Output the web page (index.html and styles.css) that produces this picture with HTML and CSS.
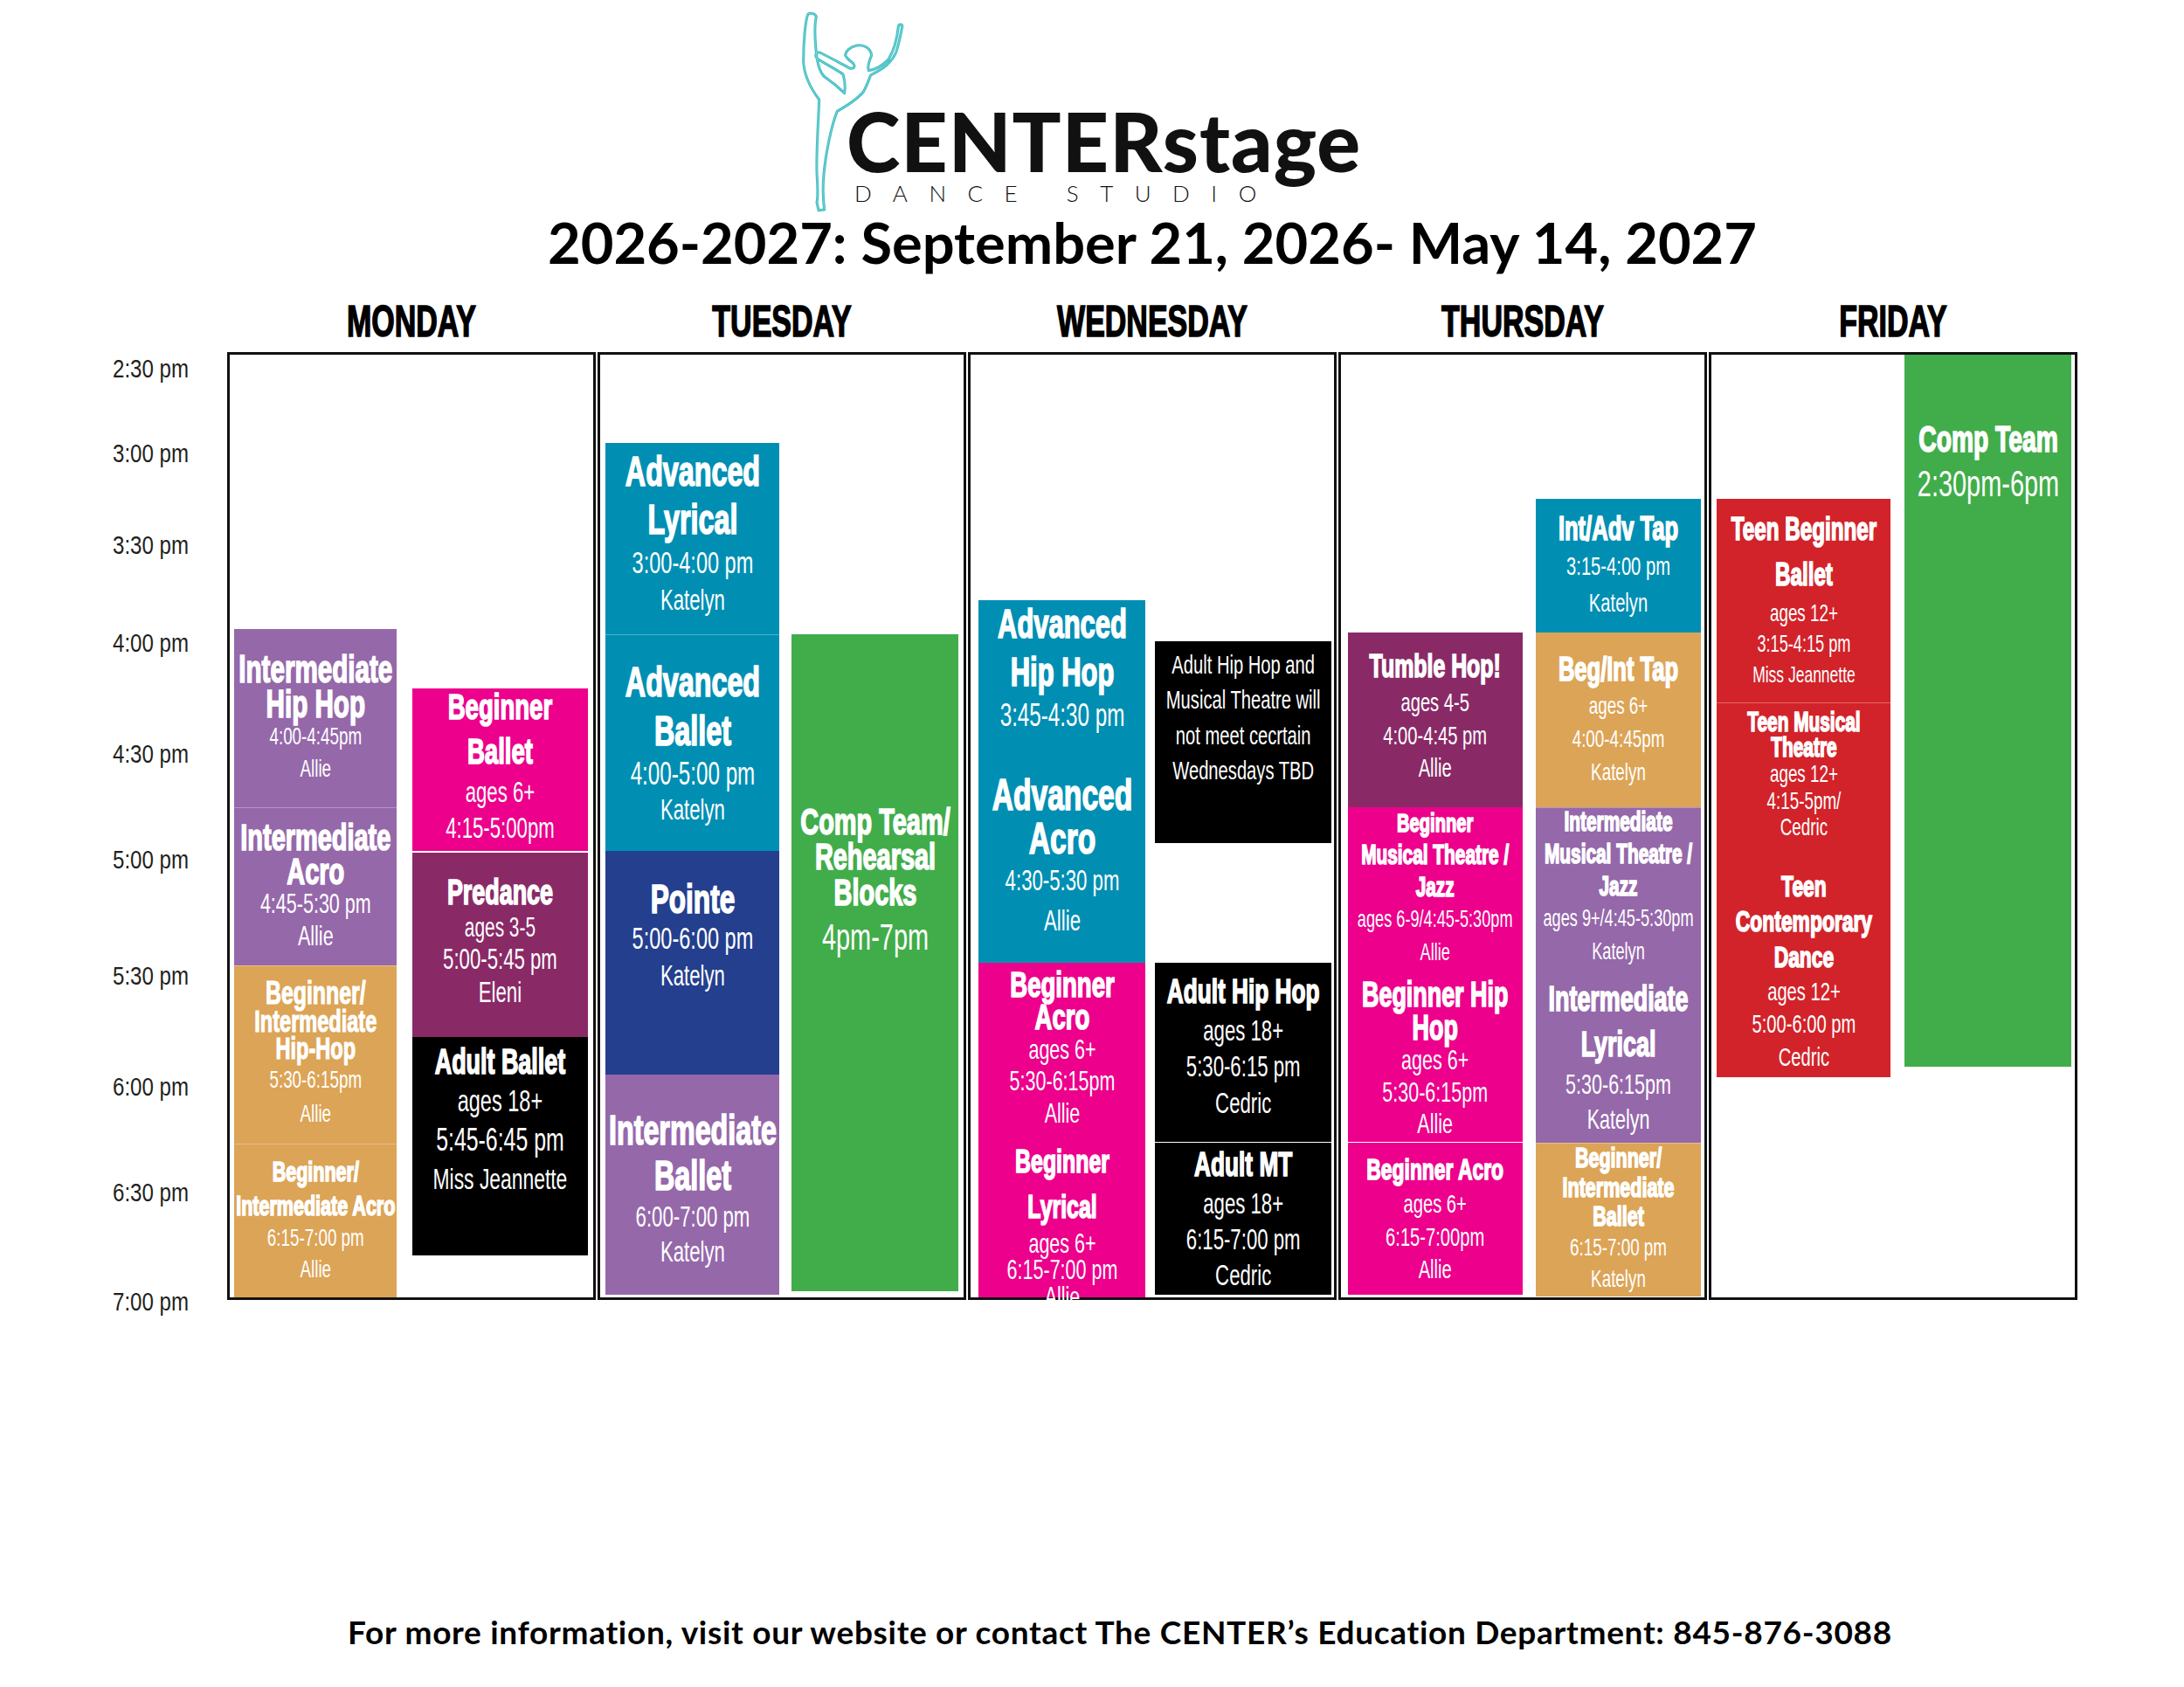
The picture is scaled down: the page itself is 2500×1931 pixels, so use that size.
FILE: index.html
```html
<!DOCTYPE html>
<html lang="en">
<head>
<meta charset="utf-8">
<title>CENTERstage Dance Studio Schedule 2026-2027</title>
<link rel="stylesheet" href="styles.css">
</head>
<body>
<header class="logo">
  <svg class="dancer" viewBox="0 0 450 705" aria-hidden="true">
    <path class="d1" d="M60,18 C50,40 44,120 44,180 C46,230 70,275 98,312 C96,380 88,480 90,560 C92,610 96,640 90,665 L96,692 L116,690 C112,660 108,630 114,570 C120,500 140,400 160,352 C190,335 230,310 250,285 C262,265 268,245 275,228 C310,210 345,190 362,150 C372,120 378,90 383,62 C386,52 372,50 370,62 C366,100 355,145 335,175 C310,200 285,210 268,212 C262,195 272,175 278,160 C275,135 250,122 228,126 C205,130 188,145 188,160 C192,172 205,178 215,188 C222,196 220,206 205,205 C185,195 150,175 100,150 C88,148 82,160 90,170 C120,190 160,210 180,225 C186,245 188,270 185,290 C165,270 140,250 118,235 C100,220 92,190 88,150 C84,110 80,60 88,28 C86,18 70,12 60,18 Z"/>
    <path class="d2" d="M60,18 C50,40 44,120 44,180 C46,230 70,275 98,312 C96,380 88,480 90,560 C92,610 96,640 90,665 L96,692 L116,690 C112,660 108,630 114,570 C120,500 140,400 160,352 C190,335 230,310 250,285 C262,265 268,245 275,228 C310,210 345,190 362,150 C372,120 378,90 383,62 C386,52 372,50 370,62 C366,100 355,145 335,175 C310,200 285,210 268,212 C262,195 272,175 278,160 C275,135 250,122 228,126 C205,130 188,145 188,160 C192,172 205,178 215,188 C222,196 220,206 205,205 C185,195 150,175 100,150 C88,148 82,160 90,170 C120,190 160,210 180,225 C186,245 188,270 185,290 C165,270 140,250 118,235 C100,220 92,190 88,150 C84,110 80,60 88,28 C86,18 70,12 60,18 Z"/>
  </svg>
  <div class="wordmark">
    <div class="brand">CENTERstage</div>
    <div class="studio">DANCE STUDIO</div>
  </div>
</header>
<h1 class="dates">2026-2027: September 21, 2026- May 14, 2027</h1>

<div class="days">
  <div class="dayname">MONDAY</div>
  <div class="dayname">TUESDAY</div>
  <div class="dayname">WEDNESDAY</div>
  <div class="dayname">THURSDAY</div>
  <div class="dayname">FRIDAY</div>
</div>

<main class="board">
  <div class="axis">
    <div class="tm" style="height:97px">2:30 pm</div>
    <div class="tm" style="height:105px">3:00 pm</div>
    <div class="tm" style="height:112px">3:30 pm</div>
    <div class="tm" style="height:127px">4:00 pm</div>
    <div class="tm" style="height:121px">4:30 pm</div>
    <div class="tm" style="height:133px">5:00 pm</div>
    <div class="tm" style="height:127px">5:30 pm</div>
    <div class="tm" style="height:121px">6:00 pm</div>
    <div class="tm" style="height:125px">6:30 pm</div>
    <div class="tm" style="height:40px">7:00 pm</div>
  </div>

  <div class="cols">
    <!-- MONDAY -->
    <section class="day mon">
      <div class="sub">
        <div class="blk pur" style="margin-top:314px;height:204px"><div class="in">
          <div class="t f44 l90">Intermediate</div><div class="t f44 l90">Hip Hop</div>
          <div class="i f28 l130">4:00-4:45pm</div><div class="i f28 l130">Allie</div>
        </div></div>
        <div class="blk pur seam" style="height:181px"><div class="in">
          <div class="t f43 l90">Intermediate</div><div class="t f43 l90">Acro</div>
          <div class="i f32 l115">4:45-5:30 pm</div><div class="i f32 l115">Allie</div>
        </div></div>
        <div class="blk org seam" style="height:204px"><div class="in">
          <div class="w f37 l90">Beginner/</div><div class="w f35 l90">Intermediate</div><div class="w f35 l90">Hip-Hop</div>
          <div class="i f28 l140">5:30-6:15pm</div><div class="i f28 l140">Allie</div>
        </div></div>
        <div class="blk org seam" style="height:176px"><div class="in">
          <div class="t f32 l120">Beginner/</div><div class="t f32 l120">Intermediate Acro</div>
          <div class="i f28 l130">6:15-7:00 pm</div><div class="i f28 l130">Allie</div>
        </div></div>
      </div>
      <div class="sub">
        <div class="blk pnk pb10" style="margin-top:382px;height:186px"><div class="in">
          <div class="t f41 l125">Beginner</div><div class="t f41 l125">Ballet</div>
          <div class="i f33 l125">ages 6+</div><div class="i f33 l125">4:15-5:00pm</div>
        </div></div>
        <div class="blk mag pb10" style="margin-top:2px;height:211px"><div class="in">
          <div class="t f40 l115">Predance</div>
          <div class="i f31 l115">ages 3-5</div><div class="i f33 l115">5:00-5:45 pm</div><div class="i f33 l115">Eleni</div>
        </div></div>
        <div class="blk blk-black pb62" style="height:250px"><div class="in">
          <div class="t f40 l115">Adult Ballet</div>
          <div class="i f35 l125">ages 18+</div><div class="i f37 l125">5:45-6:45 pm</div><div class="i f34 l125">Miss Jeannette</div>
        </div></div>
      </div>
    </section>

    <!-- TUESDAY -->
    <section class="day tue">
      <div class="sub">
        <div class="blk tel pb14" style="margin-top:101px;height:219px"><div class="in">
          <div class="t f48 l115">Advanced</div><div class="t f48 l115">Lyrical</div>
          <div class="i f35 l125">3:00-4:00 pm</div><div class="i f33 l125">Katelyn</div>
        </div></div>
        <div class="blk tel seam" style="height:248px"><div class="in">
          <div class="t f48 l115">Advanced</div><div class="t f48 l115">Ballet</div>
          <div class="i f36 l120">4:00-5:00 pm</div><div class="i f33 l120">Katelyn</div>
        </div></div>
        <div class="blk nav pb62" style="height:256px"><div class="in">
          <div class="t f47 l100">Pointe</div>
          <div class="i f35 l125">5:00-6:00 pm</div><div class="i f33 l125">Katelyn</div>
        </div></div>
        <div class="blk pur pt8" style="height:252px"><div class="in">
          <div class="t f48 l110">Intermediate</div><div class="t f48 l110">Ballet</div>
          <div class="i f33 l120">6:00-7:00 pm</div><div class="i f33 l120">Katelyn</div>
        </div></div>
      </div>
      <div class="sub">
        <div class="blk grn pb182" style="margin-top:320px;height:752px"><div class="in">
          <div class="t f43 l95">Comp Team/</div><div class="t f43 l95">Rehearsal</div><div class="t f43 l95">Blocks</div>
          <div class="i f43 l140">4pm-7pm</div>
        </div></div>
      </div>
    </section>

    <!-- WEDNESDAY -->
    <section class="day wed">
      <div class="sub">
        <div class="blk tel pb26" style="margin-top:281px;height:179px"><div class="in">
          <div class="t f46 l120">Advanced</div><div class="t f46 l120">Hip Hop</div>
          <div class="i f36 l120">3:45-4:30 pm</div>
        </div></div>
        <div class="blk tel pb6" style="height:236px"><div class="in">
          <div class="t f50 l100">Advanced</div><div class="t f50 l100">Acro</div>
          <div class="i f33 l140">4:30-5:30 pm</div><div class="i f33 l140">Allie</div>
        </div></div>
        <div class="blk pnk" style="height:198px"><div class="in">
          <div class="t f41 l90">Beginner</div><div class="t f41 l90">Acro</div>
          <div class="i f32 l115">ages 6+</div><div class="i f32 l115">5:30-6:15pm</div><div class="i f32 l115">Allie</div>
        </div></div>
        <div class="blk pnk pt18" style="height:185px"><div class="in">
          <div class="t f37 l140">Beginner</div><div class="t f37 l140">Lyrical</div>
          <div class="i f32 l95">ages 6+</div><div class="i f32 l95">6:15-7:00 pm</div><div class="i f32 l95">Allie</div>
        </div></div>
      </div>
      <div class="sub">
        <div class="blk blk-black pb56" style="margin-top:328px;height:231px"><div class="in">
          <div class="i f30 l135">Adult Hip Hop and</div><div class="i f30 l135">Musical Theatre will</div>
          <div class="i f30 l135">not meet cecrtain</div><div class="i f30 l135">Wednesdays TBD</div>
        </div></div>
        <div class="blk blk-black pb14" style="margin-top:137px;height:205px"><div class="in">
          <div class="t f39 l120">Adult Hip Hop</div>
          <div class="i f33 l125">ages 18+</div><div class="i f33 l125">5:30-6:15 pm</div><div class="i f33 l125">Cedric</div>
        </div></div>
        <div class="blk blk-black" style="margin-top:1px;height:174px"><div class="in">
          <div class="t f39 l120">Adult MT</div>
          <div class="i f33 l125">ages 18+</div><div class="i f33 l125">6:15-7:00 pm</div><div class="i f33 l125">Cedric</div>
        </div></div>
      </div>
    </section>

    <!-- THURSDAY -->
    <section class="day thu">
      <div class="sub">
        <div class="blk mag pb8" style="margin-top:318px;height:200px"><div class="in">
          <div class="t f37 l115">Tumble Hop!</div>
          <div class="i f30 l125">ages 4-5</div><div class="i f30 l125">4:00-4:45 pm</div><div class="i f30 l125">Allie</div>
        </div></div>
        <div class="blk pnk pb8" style="height:193px"><div class="in">
          <div class="t f30 l120">Beginner</div><div class="t f31 l120">Musical Theatre /</div><div class="t f31 l120">Jazz</div>
          <div class="i f27 l140">ages 6-9/4:45-5:30pm</div><div class="i f27 l140">Allie</div>
        </div></div>
        <div class="blk pnk" style="height:190px"><div class="in">
          <div class="t f40 l95">Beginner Hip</div><div class="t f40 l95">Hop</div>
          <div class="i f32 l115">ages 6+</div><div class="i f32 l115">5:30-6:15pm</div><div class="i f32 l115">Allie</div>
        </div></div>
        <div class="blk pnk" style="margin-top:1px;height:174px"><div class="in">
          <div class="t f34 l120">Beginner Acro</div>
          <div class="i f30 l125">ages 6+</div><div class="i f30 l125">6:15-7:00pm</div><div class="i f30 l125">Allie</div>
        </div></div>
      </div>
      <div class="sub">
        <div class="blk tel" style="margin-top:165px;height:153px"><div class="in">
          <div class="t f38 l115">Int/Adv Tap</div>
          <div class="i f30 l140">3:15-4:00 pm</div><div class="i f30 l140">Katelyn</div>
        </div></div>
        <div class="blk org" style="height:200px"><div class="in">
          <div class="t f38 l115">Beg/Int Tap</div>
          <div class="i f28 l135">ages 6+</div><div class="i f28 l135">4:00-4:45pm</div><div class="i f28 l135">Katelyn</div>
        </div></div>
        <div class="blk pur seam pb10" style="height:193px"><div class="in">
          <div class="t f31 l120">Intermediate</div><div class="t f31 l120">Musical Theatre /</div><div class="t f31 l120">Jazz</div>
          <div class="i f27 l140">ages 9+/4:45-5:30pm</div><div class="i f27 l140">Katelyn</div>
        </div></div>
        <div class="blk pur pb8" style="height:191px"><div class="in">
          <div class="t f40 l130">Intermediate</div><div class="t f40 l130">Lyrical</div>
          <div class="i f32 l125">5:30-6:15pm</div><div class="i f32 l125">Katelyn</div>
        </div></div>
        <div class="blk org seam" style="height:176px"><div class="in">
          <div class="t f32 l105">Beginner/</div><div class="t f32 l105">Intermediate</div><div class="t f32 l105">Ballet</div>
          <div class="i f28 l130">6:15-7:00 pm</div><div class="i f28 l130">Katelyn</div>
        </div></div>
      </div>
    </section>

    <!-- FRIDAY -->
    <section class="day fri">
      <div class="sub">
        <div class="blk red pb6" style="margin-top:165px;height:233px"><div class="in">
          <div class="t f36 l145">Teen Beginner</div><div class="t f36 l145">Ballet</div>
          <div class="i f28 l130">ages 12+</div><div class="i f27 l130">3:15-4:15 pm</div><div class="i f26 l130">Miss Jeannette</div>
        </div></div>
        <div class="blk red seam pb18" style="height:185px"><div class="in">
          <div class="t f31 l95">Teen Musical</div><div class="t f31 l95">Theatre</div>
          <div class="i f28 l110">ages 12+</div><div class="i f28 l110">4:15-5pm/</div><div class="i f28 l110">Cedric</div>
        </div></div>
        <div class="blk red" style="height:244px"><div class="in">
          <div class="t f34 l120">Teen</div><div class="t f34 l120">Contemporary</div><div class="t f34 l120">Dance</div>
          <div class="i f30 l125">ages 12+</div><div class="i f30 l125">5:00-6:00 pm</div><div class="i f30 l125">Cedric</div>
        </div></div>
      </div>
      <div class="sub">
        <div class="blk grn top72" style="height:815px"><div class="in">
          <div class="t f42 l120">Comp Team</div>
          <div class="i f43 l120">2:30pm-6pm</div>
        </div></div>
      </div>
    </section>
  </div>
</main>

<footer class="foot">For more information, visit our website or contact The CENTER’s Education Department: 845-876-3088</footer>
</body>
</html>
```
FILE: styles.css
```css
* { box-sizing: border-box; }
html, body { margin: 0; padding: 0; }
body {
  width: 2500px;
  height: 1931px;
  overflow: hidden;
  background: #fff;
  color: #000;
  font-family: "Liberation Sans", Arial, sans-serif;
}

/* ---------- logo ---------- */
.logo {
  display: flex;
  align-items: flex-start;
  padding-left: 905px;
  height: 245px;
}
.dancer {
  display: block;
  flex: none;
  width: 150px;
  height: 235px;
  margin-top: 10px;
}
.dancer path { fill: none; stroke-linejoin: round; stroke-linecap: round; }
.dancer .d1 { stroke: #3cbcc1; stroke-width: 9; }
.dancer .d2 { stroke: #8ad9db; stroke-width: 2.5; }
.wordmark {
  margin-left: -86px;
  margin-top: 115px;
}
.brand {
  font-family: Lato, "Liberation Sans", sans-serif;
  font-weight: 900;
  font-size: 93px;
  line-height: 93px;
  letter-spacing: 1px;
  color: #111;
}
.studio {
  font-family: Lato, "Liberation Sans", sans-serif;
  font-weight: 300;
  font-size: 26px;
  line-height: 26px;
  letter-spacing: 24.5px;
  padding-left: 9px;
  color: #111;
}

/* ---------- title ---------- */
.dates {
  margin: 0 0 0 260px;
  width: 2118px;
  text-align: center;
  font-family: Lato, "Liberation Sans", sans-serif;
  font-weight: 700;
  font-size: 65px;
  line-height: 64px;
}

/* ---------- day headers ---------- */
.days {
  display: grid;
  grid-template-columns: repeat(5, 422px);
  column-gap: 2px;
  margin: 34px 0 0 260px;
  height: 50px;
}
.dayname {
  text-align: center;
  font-family: "Liberation Sans", Arial, sans-serif;
  font-weight: 700;
  font-size: 50px;
  line-height: 50px;
  transform: scaleX(.68);
  -webkit-text-stroke: 1.6px #000;
}

/* ---------- board ---------- */
.board {
  display: flex;
  margin-top: 10px;
}
.axis {
  width: 260px;
  flex: none;
  padding-left: 129px;
  margin-top: -1px;
  display: flex;
  flex-direction: column;
}
.tm {
  flex: none;
  font-family: "Liberation Sans", Arial, sans-serif;
  font-size: 29px;
  line-height: 40px;
  color: #231f20;
  white-space: nowrap;
  transform: scaleX(.83);
  transform-origin: left center;
}
.cols {
  display: grid;
  grid-template-columns: repeat(5, 422px);
  column-gap: 2px;
}
.day {
  height: 1085px;
  border: 3px solid #111;
  display: grid;
  align-items: start;
}
.mon { grid-template-columns: 186px 201px; column-gap: 18px; padding-left: 5px; }
.tue { grid-template-columns: 199px 191px; column-gap: 14px; padding-left: 6px; }
.wed { grid-template-columns: 191px 202px; column-gap: 11px; padding-left: 9px; }
.thu { grid-template-columns: 200px 189px; column-gap: 15px; padding-left: 8px; }
.fri { grid-template-columns: 199px 191px; column-gap: 16px; padding-left: 6px; }

.sub {
  display: flex;
  flex-direction: column;
}

/* ---------- class blocks ---------- */
.blk {
  flex: none;
  display: flex;
  flex-direction: column;
  justify-content: center;
  align-items: flex-start;
  color: #fff;
}
.pur { background: #9568aa; }
.org { background: #dca456; }
.pnk { background: #ec008c; }
.mag { background: #892a67; }
.tel { background: #008fb3; }
.nav { background: #243f8e; }
.grn { background: #41ad4a; }
.red { background: #d2232a; }
.blk-black { background: #000; }
.seam { box-shadow: inset 0 1px 0 rgba(255,255,255,.3); }

.pb6 { padding-bottom: 6px; }
.pb8 { padding-bottom: 8px; }
.pb10 { padding-bottom: 10px; }
.pb14 { padding-bottom: 14px; }
.pb18 { padding-bottom: 18px; }
.pb26 { padding-bottom: 26px; }
.pb56 { padding-bottom: 56px; }
.pb62 { padding-bottom: 62px; }
.pb182 { padding-bottom: 182px; }
.pt8 { padding-top: 8px; }
.pt18 { padding-top: 18px; }
.top72 { justify-content: flex-start; padding-top: 72px; }

/* condensed lettering: regular-width face squeezed horizontally */
.in {
  flex: none;
  width: 148.7%;
  margin-left: -24.35%;
  transform: scaleX(.6724);
  text-align: center;
  white-space: nowrap;
  font-family: "Liberation Sans", Arial, sans-serif;
}
.t { font-weight: 700; -webkit-text-stroke: 1.7px #fff; }
.w { font-weight: 700; -webkit-text-stroke: 1.2px #fff; }
.i { font-weight: 400; }

.f26 { font-size: 26px; } .f27 { font-size: 27px; } .f28 { font-size: 28px; }
.f29 { font-size: 29px; } .f30 { font-size: 30px; } .f31 { font-size: 31px; }
.f32 { font-size: 32px; } .f33 { font-size: 33px; } .f34 { font-size: 34px; }
.f35 { font-size: 35px; } .f36 { font-size: 36px; } .f37 { font-size: 37px; }
.f38 { font-size: 38px; } .f39 { font-size: 39px; } .f40 { font-size: 40px; }
.f41 { font-size: 41px; } .f42 { font-size: 42px; } .f43 { font-size: 43px; }
.f44 { font-size: 44px; } .f46 { font-size: 46px; } .f47 { font-size: 47px; }
.f48 { font-size: 48px; } .f50 { font-size: 50px; }

.l90 { line-height: .9; } .l95 { line-height: .95; } .l100 { line-height: 1; }
.l105 { line-height: 1.05; } .l110 { line-height: 1.1; } .l115 { line-height: 1.15; }
.l120 { line-height: 1.2; } .l125 { line-height: 1.25; } .l130 { line-height: 1.3; }
.l135 { line-height: 1.35; } .l140 { line-height: 1.4; } .l145 { line-height: 1.45; }

/* ---------- footer ---------- */
.foot {
  margin-top: 338px;
  padding-left: 64px;
  text-align: center;
  font-family: Lato, "Liberation Sans", sans-serif;
  font-weight: 700;
  font-size: 37px;
  line-height: 40px;
  letter-spacing: .7px;
}
```
